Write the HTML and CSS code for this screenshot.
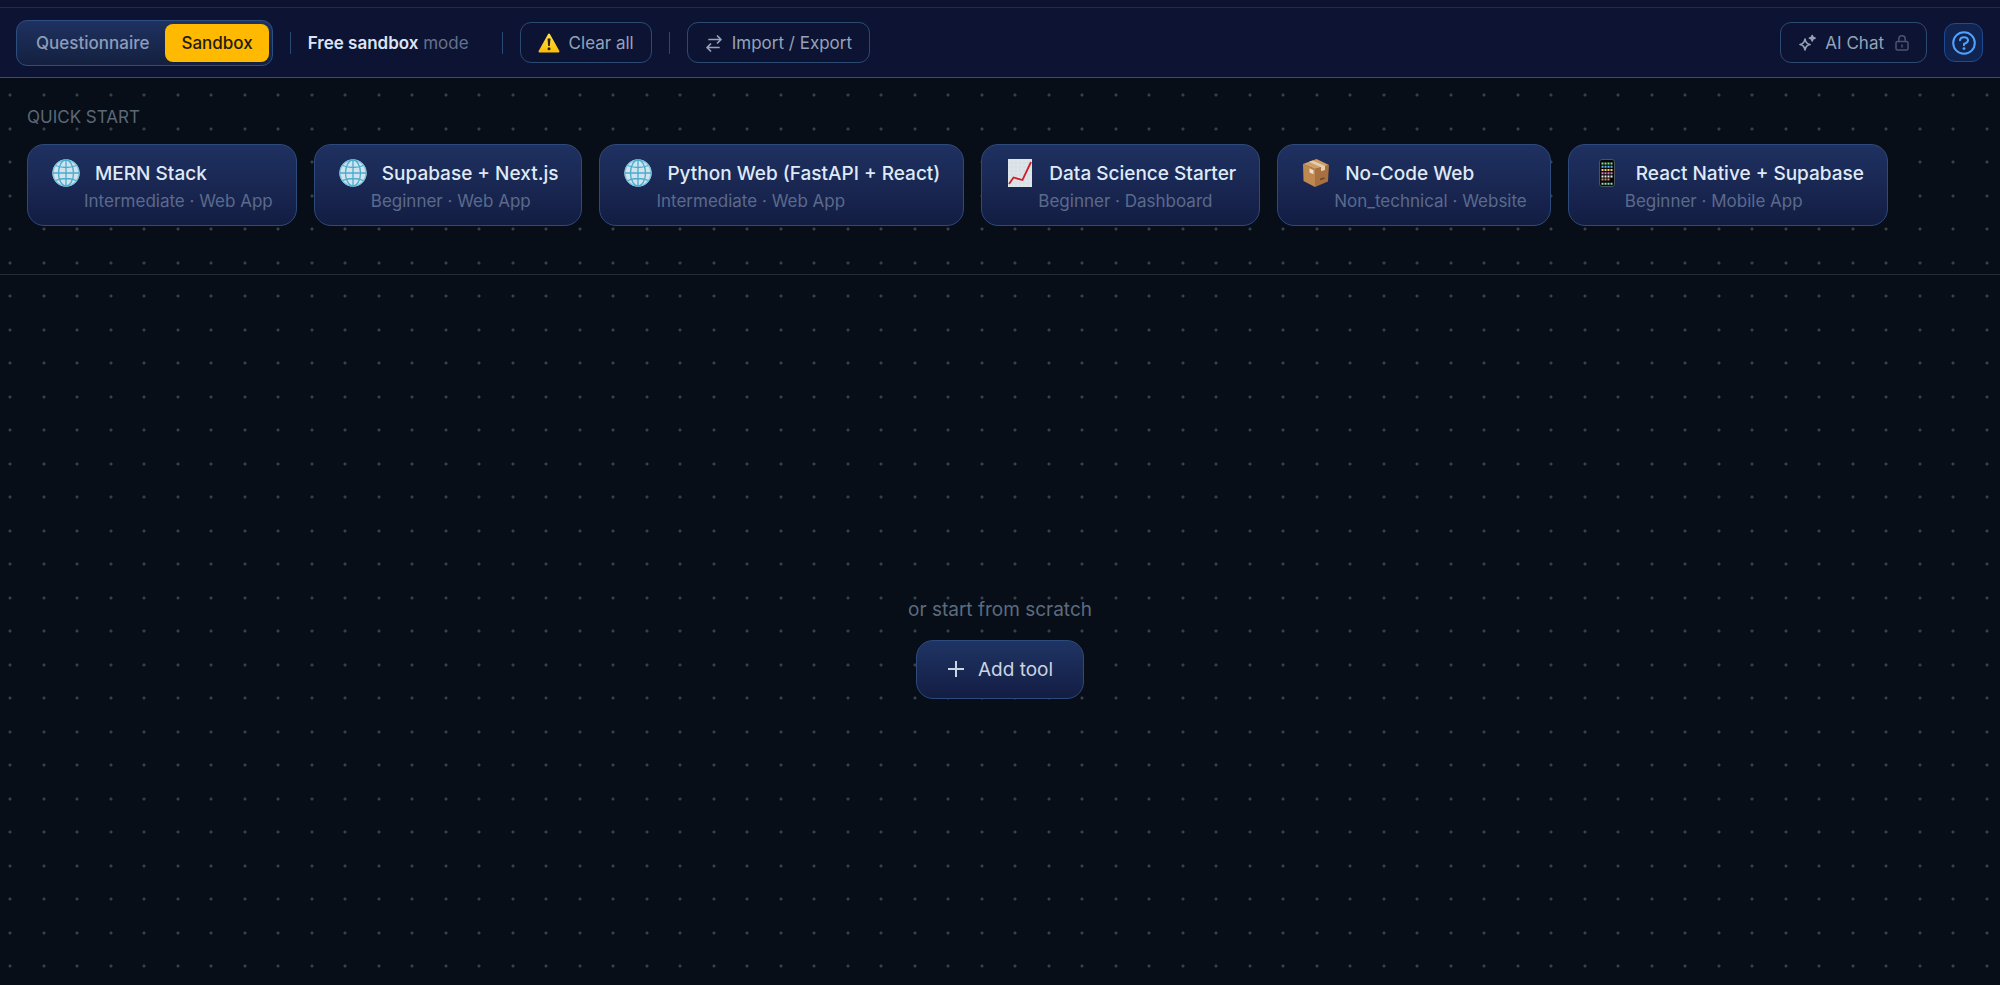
FILE: index.html
```html
<!DOCTYPE html>
<html lang="en">
<head>
  <meta charset="utf-8">
  <title>Sandbox</title>
  <link rel="stylesheet" href="styles.css">
</head>
<body>
  <!-- shared icons -->
  <svg class="defs" aria-hidden="true">
    <linearGradient id="warn" x1="0" y1="0" x2="0" y2="1">
      <stop offset="0" stop-color="#ffe14a"/>
      <stop offset="1" stop-color="#fcbe0b"/>
    </linearGradient>
    <symbol id="globe" viewBox="0 0 28 28">
      <circle cx="14" cy="14" r="13.5" fill="#d3e3ec"/>
      <g fill="none" stroke="#4aaccf" stroke-width="1.3">
        <circle cx="14" cy="14" r="13" stroke="#7cc4dc"/>
        <ellipse cx="14" cy="14" rx="7.5" ry="13"/>
        <path d="M14 1v26M1 14h26M3.5 6.5q10.5 4 21 0M3.5 21.5q10.5-4 21 0"/>
      </g>
    </symbol>
  </svg>

  <header class="toolbar">
    <div class="toggle">
      <button type="button" class="toggle-btn">Questionnaire</button>
      <button type="button" class="toggle-btn active">Sandbox</button>
    </div>
    <span class="divider"></span>
    <p class="mode"><strong>Free sandbox</strong> mode</p>
    <span class="divider"></span>
    <button type="button" class="btn">
      <svg width="22" height="20" viewBox="0 0 22 20">
        <path d="M11 1.5L20.5 18.5H1.5Z" fill="url(#warn)" stroke="url(#warn)" stroke-width="2" stroke-linejoin="round"/>
        <path d="M9.5 5.5h3l-.7 7.5h-1.6Z" fill="#2c2610"/>
        <circle cx="11" cy="15.8" r="1.5" fill="#2c2610"/>
      </svg>
      Clear all
    </button>
    <span class="divider"></span>
    <button type="button" class="btn">
      <svg class="line" width="18" height="18" viewBox="0 0 18 18">
        <path d="M4 5.5h12M12.5 2l3.500 3.500-3.500 3.500M14 13.500H2M5.500 10l-3.500 3.500 3.500 3.500"/>
      </svg>
      Import / Export
    </button>
    <div class="toolbar-right">
      <button type="button" class="btn">
        <svg class="line" width="18" height="18" viewBox="0 0 18 18">
          <path d="M7 5Q7.700 9.800 12 10.500 7.700 11.200 7 16 6.300 11.200 2 10.500 6.300 9.800 7 5ZM14.200 1.500Q14.400 4 17 4.200 14.400 4.500 14.200 7 14 4.500 11.500 4.200 14 4 14.200 1.500Z"/>
        </svg>
        AI Chat
        <svg class="line lock" width="14" height="16" viewBox="0 0 14 16">
          <rect x="1" y="6.5" width="12" height="8.5" rx="1.5"/>
          <path d="M3.8 6.5V4a3.2 3.2 0 0 1 6.4 0v2.5M7 10v2"/>
        </svg>
      </button>
      <button type="button" class="help" aria-label="Help">
        <svg width="24" height="24" viewBox="0 0 24 24">
          <circle cx="12" cy="12" r="10.8"/>
          <path d="M8 9.200Q8.200 6.300 12 6.300t4 3.200Q16 11.600 12 13v1.200"/>
          <circle class="dot" cx="12" cy="17.600" r="1.400"/>
        </svg>
      </button>
    </div>
  </header>

  <main class="canvas">
    <section class="quick-start">
      <h2>QUICK START</h2>
      <div class="cards">
        <button type="button" class="card">
          <span class="card-title"><svg class="emoji" viewBox="0 0 28 28"><use href="#globe"/></svg>MERN Stack</span>
          <span class="card-sub">Intermediate · Web App</span>
        </button>
        <button type="button" class="card">
          <span class="card-title"><svg class="emoji" viewBox="0 0 28 28"><use href="#globe"/></svg>Supabase + Next.js</span>
          <span class="card-sub">Beginner · Web App</span>
        </button>
        <button type="button" class="card">
          <span class="card-title"><svg class="emoji" viewBox="0 0 28 28"><use href="#globe"/></svg>Python Web (FastAPI + React)</span>
          <span class="card-sub">Intermediate · Web App</span>
        </button>
        <button type="button" class="card">
          <span class="card-title">
            <svg class="emoji" viewBox="0 0 28 28">
              <rect x="2" y="0" width="24" height="28" fill="#dfe6ea"/>
              <path d="M6 0v28M10 0v28M14 0v28M18 0v28M22 0v28M2 4h24M2 8h24M2 12h24M2 16h24M2 20h24M2 24h24" stroke="#d2dce1" stroke-width=".6"/>
              <path d="M3 25l4.5-6.500L16.500 21 25 3" fill="none" stroke="#cf1f2b" stroke-width="1.8"/>
            </svg>Data Science Starter
          </span>
          <span class="card-sub">Beginner · Dashboard</span>
        </button>
        <button type="button" class="card">
          <span class="card-title">
            <svg class="emoji" viewBox="0 0 28 28">
              <path d="M1 5l12 5v18L1.5 22Z" fill="#bf884f"/>
              <path d="M13 10l14-4-1 16.500L13 28Z" fill="#a87040"/>
              <path d="M1 5L14.500 0 27 6l-14 4Z" fill="#cf9f68"/>
              <path d="M7 2.800l3.500-1.300L23 7v4l-4 1.200V8.300Z" fill="#e5cfae"/>
              <path d="M7.500 9.500l4 1.700v4l-4-1.700Z" fill="#ecdfcb"/>
              <path d="M18 20.500l4.500-1.500" stroke="#70451f" stroke-width="1.5"/>
            </svg>No-Code Web
          </span>
          <span class="card-sub">Non_technical · Website</span>
        </button>
        <button type="button" class="card">
          <span class="card-title">
            <svg class="emoji" viewBox="0 0 28 28">
              <rect x="6.5" y=".5" width="15" height="27" rx="2.5" fill="#050709" stroke="#4b5258"/>
              <g fill="none" stroke-width="2" stroke-dasharray="2 1">
                <path d="M8.500 4.500h11" stroke="#7fe08f"/>
                <path d="M8.500 7.800h11" stroke="#63b6e8"/>
                <path d="M8.500 11h11" stroke="#f0cf62"/>
                <path d="M8.500 14.200h11" stroke="#d978c2"/>
                <path d="M8.500 17.500h11" stroke="#e5e9ec"/>
                <path d="M8.500 20.500h8" stroke="#e08a55"/>
                <path d="M8.500 24.800h11" stroke="#82e5cb"/>
              </g>
            </svg>React Native + Supabase
          </span>
          <span class="card-sub">Beginner · Mobile App</span>
        </button>
      </div>
    </section>

    <section class="scratch">
      <p>or start from scratch</p>
      <button type="button" class="add">
        <svg width="18" height="18" viewBox="0 0 18 18"><path d="M9 1v16M1 9h16"/></svg>
        Add tool
      </button>
    </section>
  </main>
</body>
</html>
```

FILE: styles.css
```css
* {
  box-sizing: border-box;
}

body {
  margin: 0;
  min-height: 100vh;
  display: flex;
  flex-direction: column;
  background-color: #070e17;
  color: #94a3b8;
  font-family: Inter, "Liberation Sans", sans-serif;
  font-size: 17px;
}

h2, p {
  margin: 0;
}

button {
  font-family: inherit;
  font-size: inherit;
  color: inherit;
  cursor: pointer;
}

svg {
  flex-shrink: 0;
}

.defs {
  position: absolute;
  width: 0;
  height: 0;
}

/* toolbar */
.toolbar {
  display: flex;
  align-items: center;
  gap: 17px;
  height: 78px;
  padding: 8px 17px 0 16px;
  background: linear-gradient(#0c1230 7px, #212a4b 7px, #212a4b 8px, #0d1333 8px);
  border-bottom: 1px solid #30507a;
}

.toggle {
  display: flex;
  padding: 3px;
  border: 1px solid #2c4f80;
  border-radius: 11px;
  background: linear-gradient(#1e3160, #14203f);
}

.toggle-btn {
  height: 38px;
  padding: 0 16px;
  border: none;
  border-radius: 8px;
  background: none;
  font-weight: 500;
  color: #8c9cbb;
}

.toggle-btn.active {
  background: #ffb900;
  color: #1d1d14;
}

.divider {
  width: 1px;
  height: 22px;
  background: #2a4a76;
}

.mode {
  color: #64708f;
  padding-right: 16px;
}

.mode strong {
  font-weight: 600;
  color: #dbe4f5;
}

.btn {
  display: flex;
  align-items: center;
  gap: 9px;
  height: 41px;
  padding: 0 17px;
  border: 1px solid #2c4a70;
  border-radius: 11px;
  background: none;
}

.line {
  fill: none;
  stroke: #94a3b8;
  stroke-width: 1.7;
  stroke-linecap: round;
  stroke-linejoin: round;
}

.lock {
  margin-left: 2px;
  stroke: #4a5470;
  stroke-width: 1.5;
}

.toolbar-right {
  display: flex;
  align-items: center;
  gap: 17px;
  margin-left: auto;
}

.help {
  display: flex;
  align-items: center;
  justify-content: center;
  width: 39px;
  height: 39px;
  padding: 0;
  border: 1px solid #1d4a92;
  border-radius: 11px;
  background: #10244f;
}

.help svg {
  fill: none;
  stroke: #51a2ff;
  stroke-width: 2;
  stroke-linecap: round;
}

.help .dot {
  fill: #51a2ff;
  stroke: none;
}

/* dotted canvas, two dots per 67px tile in each direction */
.canvas {
  flex: 1;
  display: flex;
  flex-direction: column;
  background-image:
    radial-gradient(circle at 10px 17px, #36414c 1px, transparent 2px),
    radial-gradient(circle at 44px 17px, #36414c 1px, transparent 2px),
    radial-gradient(circle at 10px 51px, #36414c 1px, transparent 2px),
    radial-gradient(circle at 44px 51px, #36414c 1px, transparent 2px);
  background-size: 67px 67px;
}

.quick-start {
  padding: 28px 27px 48px;
  border-bottom: 1px solid #222b38;
}

.quick-start h2 {
  margin-bottom: 16px;
  font-size: 17px;
  line-height: 22px;
  font-weight: 400;
  color: #5c6877;
}

.cards {
  display: flex;
  flex-wrap: wrap;
  gap: 17px;
}

.card {
  display: flex;
  flex-direction: column;
  height: 82px;
  padding: 14px 23px 14px 24px;
  border: 1px solid #2d4a7c;
  border-radius: 17px;
  background: linear-gradient(#1f3161, #131d43);
  text-align: left;
}

.card-title {
  display: flex;
  align-items: center;
  gap: 15px;
  height: 28px;
  font-size: 19px;
  font-weight: 500;
  color: #dfe9f7;
}

.emoji {
  width: 28px;
  height: 28px;
}

.card-sub {
  padding-left: 32px;
  line-height: 28px;
  color: #5b6a8c;
}

/* empty state */
.scratch {
  flex: 1;
  display: flex;
  flex-direction: column;
  align-items: center;
  justify-content: center;
  gap: 16px;
  padding-top: 34px;
}

.scratch p {
  font-size: 19px;
  line-height: 28px;
  color: #5c6b80;
}

.add {
  display: flex;
  align-items: center;
  gap: 13px;
  height: 59px;
  padding: 0 30px;
  border: 1px solid #2d4a7c;
  border-radius: 17px;
  background: linear-gradient(#1f3464, #131d43);
  font-size: 19px;
  color: #cad5e2;
}

.add svg {
  fill: none;
  stroke: #cad5e2;
  stroke-width: 2;
}
```
